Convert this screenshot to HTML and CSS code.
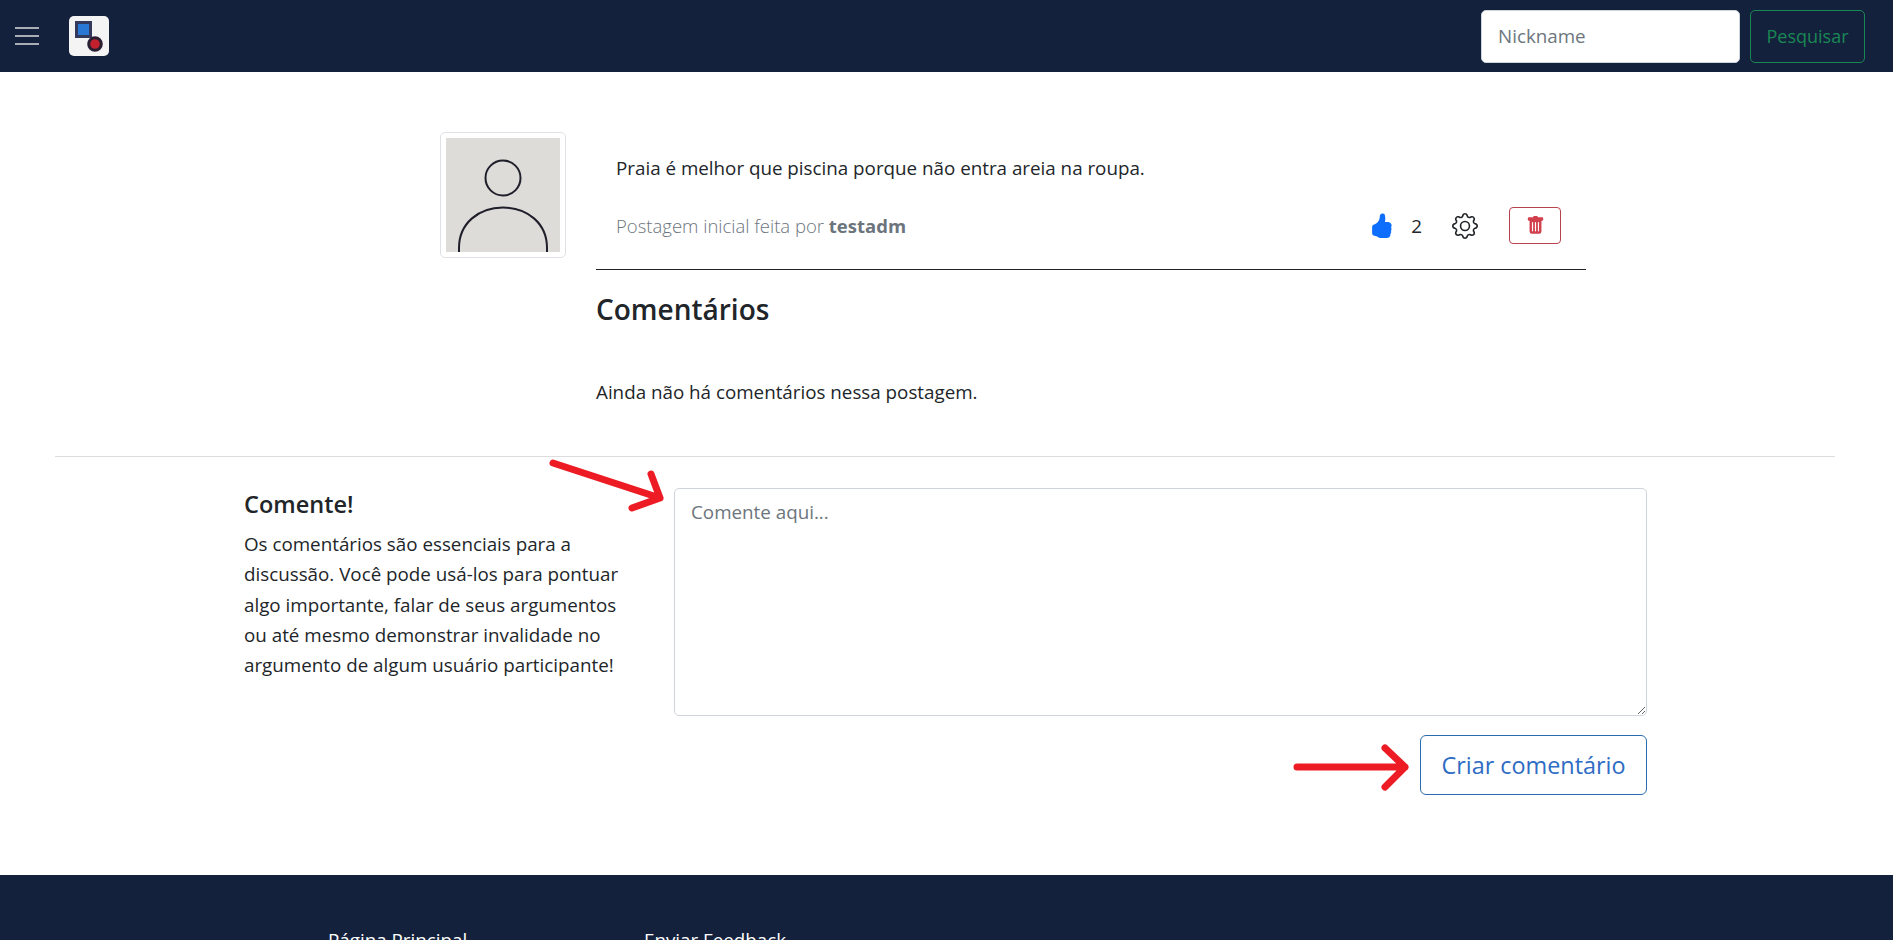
FILE: index.html
```html
<!DOCTYPE html>
<html lang="pt-BR">
    <head>
        <meta charset="utf-8">
        <title>Postagem</title>
        <link rel="stylesheet" href="styles.css">
    </head>
    <body>
    <div class="page">
        <nav class="navbar">
            <button class="menu-btn" type="button"><span></span><span></span><span></span></button>
            <div class="logo">
                <svg width="40" height="40" viewBox="0 0 40 40">
                    <rect x="7.5" y="6.5" width="14" height="14" fill="#2a78d6" stroke="#343a5c" stroke-width="3"/>
                    <circle cx="26" cy="28" r="6.3" fill="#c1202c" stroke="#2a1f33" stroke-width="3"/>
                </svg>
            </div>
            <form class="search">
                <input class="search-input" type="text" placeholder="Nickname">
                <button class="search-btn" type="button">Pesquisar</button>
            </form>
        </nav>

        <section class="post">
            <div class="avatar">
                <svg width="114" height="114" viewBox="0 0 114 114">
                    <rect width="114" height="114" fill="#dedcd9"/>
                    <circle cx="57" cy="40" r="17.5" fill="none" stroke="#1f1f2b" stroke-width="2"/>
                    <path d="M13 114V110C13 85 33 69.500 57 69.500C81 69.500 101 85 101 110V114" fill="none" stroke="#1f1f2b" stroke-width="2"/>
                </svg>
            </div>
            <div class="post-main">
                <p class="post-text">Praia é melhor que piscina porque não entra areia na roupa.</p>
                <div class="post-info">
                    <span class="post-author">Postagem inicial feita por <b>testadm</b></span>
                    <svg class="icon-like" width="25" height="25" viewBox="0 0 16 16" fill="#0d6efd">
                        <path d="M6.956 1.745C7.021.81 7.908.087 8.864.325l.261.066c.463.116.874.456 1.012.965.22.816.533 2.511.062 4.51a9.84 9.84 0 0 1 .443-.051c.713-.065 1.669-.072 2.516.21.518.173.994.681 1.2 1.273.184.532.16 1.162-.234 1.733.058.119.103.242.138.363.077.27.113.567.113.856 0 .289-.036.586-.113.856-.039.135-.09.273-.16.404.169.387.107.819-.003 1.148a3.163 3.163 0 0 1-.488.901c.054.152.076.312.076.465 0 .305-.089.625-.253.912C13.1 15.522 12.437 16 11.5 16H8c-.605 0-1.07-.081-1.466-.218a4.82 4.82 0 0 1-.97-.484l-.048-.03c-.504-.307-.999-.609-2.068-.722C2.682 14.464 2 13.846 2 13V9c0-.85.685-1.432 1.357-1.615.849-.232 1.574-.787 2.132-1.41.56-.627.914-1.28 1.039-1.639.199-.575.356-1.539.428-2.59z"/>
                    </svg>
                    <span class="like-count">2</span>
                    <svg class="icon-gear" width="26" height="26" viewBox="0 0 16 16" fill="#212529">
                        <path d="M8 4.754a3.246 3.246 0 1 0 0 6.492 3.246 3.246 0 0 0 0-6.492zM5.754 8a2.246 2.246 0 1 1 4.492 0 2.246 2.246 0 0 1-4.492 0z"/>
                        <path d="M9.796 1.343c-.527-1.79-3.065-1.79-3.592 0l-.094.319a.873.873 0 0 1-1.255.52l-.292-.16c-1.64-.892-3.433.902-2.54 2.541l.159.292a.873.873 0 0 1-.52 1.255l-.319.094c-1.79.527-1.79 3.065 0 3.592l.319.094a.873.873 0 0 1 .52 1.255l-.16.292c-.892 1.64.901 3.434 2.541 2.54l.292-.159a.873.873 0 0 1 1.255.52l.094.319c.527 1.79 3.065 1.79 3.592 0l.094-.319a.873.873 0 0 1 1.255-.52l.292.16c1.64.893 3.434-.902 2.54-2.541l-.159-.292a.873.873 0 0 1 .52-1.255l.319-.094c1.79-.527 1.79-3.065 0-3.592l-.319-.094a.873.873 0 0 1-.52-1.255l.16-.292c.893-1.64-.902-3.433-2.541-2.54l-.292.159a.873.873 0 0 1-1.255-.52l-.094-.319zm-2.633.283c.246-.835 1.428-.835 1.674 0l.094.319a1.873 1.873 0 0 0 2.693 1.115l.291-.16c.764-.415 1.6.42 1.184 1.185l-.159.292a1.873 1.873 0 0 0 1.116 2.692l.318.094c.835.246.835 1.428 0 1.674l-.319.094a1.873 1.873 0 0 0-1.115 2.693l.16.291c.415.764-.42 1.6-1.185 1.184l-.291-.159a1.873 1.873 0 0 0-2.693 1.116l-.094.318c-.246.835-1.428.835-1.674 0l-.094-.319a1.873 1.873 0 0 0-2.692-1.115l-.292.16c-.764.415-1.6-.42-1.184-1.185l.159-.291A1.873 1.873 0 0 0 1.945 8.93l-.319-.094c-.835-.246-.835-1.428 0-1.674l.319-.094A1.873 1.873 0 0 0 3.06 4.377l-.16-.292c-.415-.764.42-1.6 1.185-1.184l.292.159a1.873 1.873 0 0 0 2.692-1.115l.094-.319z"/>
                    </svg>
                    <button class="delete-btn" type="button">
                        <svg width="19" height="19" viewBox="0 0 16 16" fill="#d23f4d">
                            <path d="M2.5 1a1 1 0 0 0-1 1v1a1 1 0 0 0 1 1H3v9a2 2 0 0 0 2 2h6a2 2 0 0 0 2-2V4h.5a1 1 0 0 0 1-1V2a1 1 0 0 0-1-1H10a1 1 0 0 0-1-1H7a1 1 0 0 0-1 1H2.500zm3 4a.5.5 0 0 1 .5.5v7a.5.5 0 0 1-1 0v-7a.5.5 0 0 1 .5-.5zM8 5a.5.5 0 0 1 .5.5v7a.5.5 0 0 1-1 0v-7A.5.5 0 0 1 8 5zm3 .5v7a.5.5 0 0 1-1 0v-7a.5.5 0 0 1 1 0z"/>
                        </svg>
                    </button>
                </div>
                <div class="comments">
                    <h3>Comentários</h3>
                    <p>Ainda não há comentários nessa postagem.</p>
                </div>
            </div>
        </section>

        <hr class="divider">

        <section class="new-comment">
            <div class="new-comment-info">
                <h4>Comente!</h4>
                <p>Os comentários são essenciais para a discussão. Você pode usá-los para pontuar algo importante, falar de seus argumentos ou até mesmo demonstrar invalidade no argumento de algum usuário participante!</p>
            </div>
            <form class="new-comment-form">
                <textarea placeholder="Comente aqui..."></textarea>
                <button class="create-btn" type="button">Criar comentário</button>
            </form>
        </section>

        <footer class="footer">
            <a href="#">Página Principal</a>
            <a href="#">Enviar Feedback</a>
        </footer>

        <!-- setas vermelhas por cima da captura -->
        <svg class="arrows" width="1893" height="940" viewBox="0 0 1893 940" fill="none" stroke="#ed1c24" stroke-width="7" stroke-linecap="round" stroke-linejoin="round">
            <path d="M553 463L660 498M651 474L660 498L632 508"/>
            <path d="M1297 767L1405 767M1385 748L1405 767L1385 787"/>
        </svg>
    </div>
    </body>
</html>
```

FILE: styles.css
```css
*{
    box-sizing:border-box;
}
html,body{
    margin:0;
    padding:0;
}
body{
    font-family:"Open Sans","Noto Sans",sans-serif;
    font-size:18.8px;
    color:#212529;
    background:#fff;
}
p{
    margin:0;
}
.page{
    position:relative;
    display:flex;
    flex-direction:column;
    height:100vh;
    overflow:hidden;
}

/* navbar */
.navbar{
    flex:none;
    display:flex;
    align-items:center;
    height:72px;
    padding:0 28px 0 15px;
    background:#14213d;
}
.menu-btn{
    display:flex;
    flex-direction:column;
    gap:6px;
    width:24px;
    padding:0;
    border:none;
    background:none;
}
.menu-btn span{
    display:block;
    height:2px;
    background:#a9adb6;
}
.logo{
    width:40px;
    height:40px;
    margin-left:30px;
    border-radius:5px;
    background:#f5f4f5;
}
.logo svg{
    display:block;
}
.search{
    display:flex;
    gap:10px;
    margin-left:auto;
}
.search-input{
    width:259px;
    height:53px;
    padding:0 16px;
    border:1px solid #ced4da;
    border-radius:5px;
    font:inherit;
}
.search-input::placeholder,textarea::placeholder{
    color:#6c757d;
    opacity:1;
}
.search-btn{
    width:115px;
    height:53px;
    padding:0;
    border:1px solid #198754;
    border-radius:5px;
    background:none;
    color:#198754;
    font:inherit;
    font-size:18px;
}

/* postagem */
.post{
    flex:none;
    display:flex;
    align-items:flex-start;
    padding:60px 0 0 440px;
}
.avatar{
    flex:none;
    width:126px;
    height:126px;
    padding:5px;
    border:1px solid #dee2e6;
    border-radius:5px;
}
.avatar svg{
    display:block;
}
.post-main{
    width:990px;
    margin-left:30px;
}
.post-text{
    padding:21px 0 0 20px;
    line-height:30px;
}
.post-info{
    display:flex;
    align-items:center;
    height:65px;
    margin-top:22px;
    padding:0 25px 23px 20px;
    border-bottom:1px solid #212529;
}
.post-author{
    margin-right:auto;
    color:#6c757d;
    font-size:18.5px;
    font-weight:300;
}
.post-author b{
    font-weight:700;
}
.like-count{
    margin:0 30px 0 17px;
}
.delete-btn{
    display:flex;
    align-items:center;
    justify-content:center;
    width:52px;
    height:37px;
    margin-left:31px;
    padding:0;
    border:1px solid #b8434f;
    border-radius:4px;
    background:none;
}
.comments h3{
    margin:17px 0 0;
    font-size:28px;
    font-weight:600;
    line-height:44px;
}
.comments p{
    margin-top:46px;
    line-height:30px;
}

.divider{
    flex:none;
    width:1780px;
    margin:49px 0 0 55px;
    border:none;
    border-top:1px solid #ddd;
}

/* novo comentario */
.new-comment{
    flex:none;
    display:flex;
    align-items:flex-start;
    padding:31px 0 0 244px;
}
.new-comment-info{
    width:375px;
}
.new-comment-info h4{
    margin:1px 0 0;
    font-size:23.5px;
    font-weight:600;
    line-height:30px;
}
.new-comment-info p{
    margin-top:10px;
    line-height:30.300px;
}
.new-comment-form{
    display:flex;
    flex-direction:column;
    align-items:flex-end;
    width:973px;
    margin-left:55px;
}
textarea{
    display:block;
    width:100%;
    height:228px;
    padding:8px 16px;
    border:1px solid #ced4da;
    border-radius:5px;
    font:inherit;
    line-height:30px;
}
.create-btn{
    width:227px;
    height:60px;
    margin-top:19px;
    padding:0;
    border:1px solid #2a6cb0;
    border-radius:6px;
    background:none;
    color:#2f6cc4;
    font:inherit;
    font-size:23.4px;
}

/* rodape */
.footer{
    flex:1;
    display:flex;
    margin-top:80px;
    padding:50px 0 0 328px;
    background:#14213d;
}
.footer a{
    width:316px;
    color:#fff;
    text-decoration:none;
    line-height:30px;
}

.arrows{
    position:absolute;
    top:0;
    left:0;
    pointer-events:none;
}
```
